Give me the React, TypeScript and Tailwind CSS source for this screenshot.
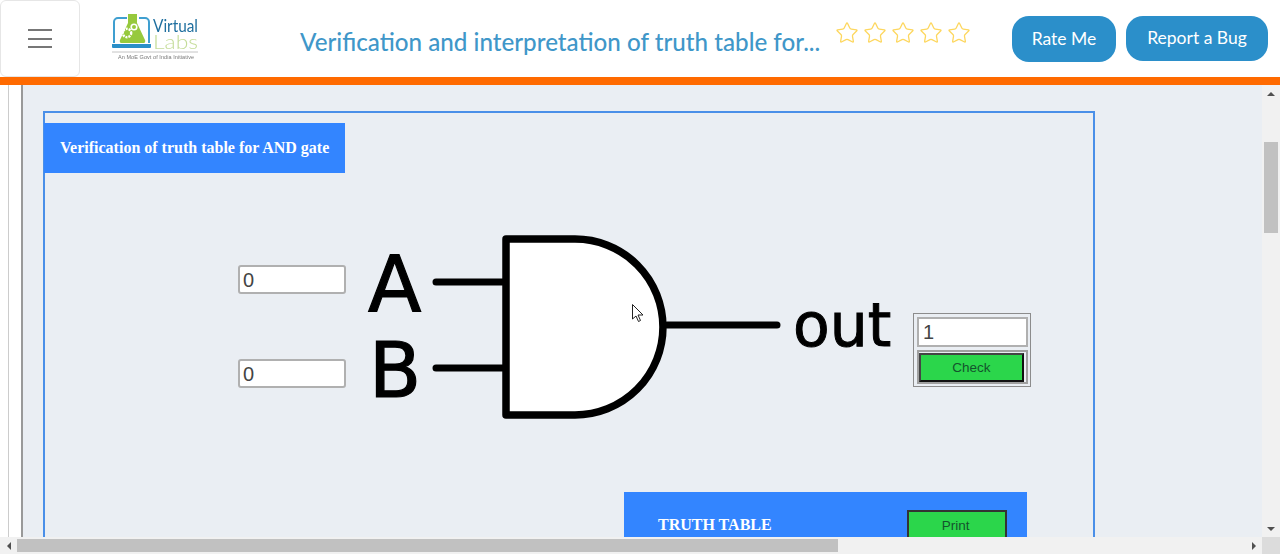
import React from 'react';
import { Star } from 'lucide-react';

const Logo = () => (
  <svg width="92" height="56" viewBox="0 0 92 56" className="block blur-[0.35px]">
    {/* laptop */}
    <path d="M4 33V12a4 4 0 0 1 4-4h9M29 8h6a4 4 0 0 1 4 4v21" fill="none" stroke="#3f9fd0" strokeWidth="2" />
    <path d="M2 34h39v3a1 1 0 0 1-1 1H3a1 1 0 0 1-1-1z" fill="#2a8fc8" />
    {/* flask */}
    <path d="M18 4h9v9l8 17a2 2 0 0 1-2 3H12a2 2 0 0 1-2-3l8-17z" fill="#97c93d" />
    <circle cx="17" cy="23" r="4.2" fill="none" stroke="#fff" strokeWidth="2.4" strokeDasharray="2 1" />
    <circle cx="24" cy="17" r="2.8" fill="none" stroke="#fff" strokeWidth="1.6" />
    <text x="43" y="22" fontFamily="Lato, sans-serif" fontSize="16.5" fill="#1f6f9f" textLength="45" lengthAdjust="spacingAndGlyphs">Virtual</text>
    <text x="43" y="39" fontFamily="Lato, sans-serif" fontSize="20" fontWeight="300" fill="#c4dc98" textLength="45" lengthAdjust="spacingAndGlyphs">Labs</text>
    <path d="M2 42h86" stroke="#c4c4c4" strokeWidth="1" />
    <text x="8" y="49" fontFamily="Liberation Sans, sans-serif" fontSize="5.5" fill="#777" textLength="76">An MoE Govt of India Initiative</text>
  </svg>
);

const Gate = () => (
  <svg width="540" height="200" viewBox="360 225 540 200" className="block shrink-0">
    <path d="M506 239H575A88 88 0 0 1 575 415H506Z" fill="#fff" stroke="#000" strokeWidth="7.5" strokeLinejoin="round" />
    <path d="M436 282H503M436 368H503M667 325H777" fill="none" stroke="#000" strokeWidth="7" strokeLinecap="round" />
    <g fontFamily="DejaVu Sans, sans-serif" fill="#000" stroke="#000">
      <text x="368" y="312" fontSize="78" strokeWidth="1.2">A</text>
      <text x="369" y="397" fontSize="76" strokeWidth="1.2">B</text>
      <text x="793" y="346" fontSize="60" strokeWidth="1">out</text>
    </g>
  </svg>
);

const ArrowUp = () => <span className="block w-0 h-0 border-x-[4px] border-x-transparent border-b-[4px] border-b-[#505050]" />;
const ArrowDown = () => <span className="block w-0 h-0 border-x-[4px] border-x-transparent border-t-[4px] border-t-[#505050]" />;

export default function App() {
  return (
    <div className="w-[1280px] h-[554px] flex flex-col overflow-hidden bg-white font-['Liberation_Sans',sans-serif]">
      {/* Header */}
      <header className="h-[85px] shrink-0 flex items-start bg-white border-b-[8px] border-[#ff6a00]">
        <button className="w-[80px] h-[77px] shrink-0 flex flex-col items-center justify-center gap-[6.5px] border border-[#e6e6e6] rounded-md">
          <span className="block w-[24px] h-[2px] bg-[#777]" />
          <span className="block w-[24px] h-[2px] bg-[#777]" />
          <span className="block w-[24px] h-[2px] bg-[#777]" />
        </button>
        <div className="ml-[30px] mt-[10px] shrink-0">
          <Logo />
        </div>
        <h1 className="ml-[98px] mt-[26px] w-[530px] shrink-0 whitespace-nowrap font-['Lato',sans-serif] text-[24.2px] leading-[32px] font-medium text-[#3f97c9]">
          Verification and interpretation of truth table for...
        </h1>
        <div className="ml-[5px] mt-[21px] flex gap-[4px] shrink-0 text-[#fdd75f]">
          {[0, 1, 2, 3, 4].map((i) => (
            <Star key={i} size={24} strokeWidth={1.3} />
          ))}
        </div>
        <button className="ml-[41px] mt-[16px] w-[104px] h-[46px] shrink-0 rounded-[17px] bg-[#2b8fca] text-white font-['Lato',sans-serif] text-[17.5px]">
          Rate Me
        </button>
        <button className="ml-[10px] mt-[16px] w-[142px] h-[45px] shrink-0 rounded-[17px] bg-[#2b8fca] text-white font-['Lato',sans-serif] text-[17.5px]">
          Report a Bug
        </button>
      </header>

      {/* Body */}
      <div className="flex-1 min-h-0 flex">
        <div className="flex-1 min-w-0 flex overflow-hidden">
          <div className="w-[8px] shrink-0 bg-white" />
          <div className="w-[13px] shrink-0 bg-white border-l border-[#cccccc]" />
          <div className="flex-1 min-w-0 bg-[#eaeef3] border-l-2 border-[#999999] pl-[20px] pt-[26px] overflow-hidden">
            <div className="w-[1052px] h-[600px] border-2 border-b-0 border-[#4a8fe8] pt-[10px]">
              <div className="w-[301px] h-[50px] -ml-px pb-px flex items-center pl-[16px] bg-[#3385ff] text-white font-['Liberation_Serif',serif] font-bold text-[16px]">
                Verification of truth table for AND gate
              </div>

              {/* Gate row */}
              <div className="flex items-start mt-[52px]">
                <div className="ml-[193px] pt-[40px] w-[108px] shrink-0 flex flex-col gap-[65px]">
                  <input readOnly value="0" className="block w-[108px] h-[29px] px-[3px] bg-white border-2 border-[#b0b0b0] rounded-[3px] text-[20px] text-[#444]" />
                  <input readOnly value="0" className="block w-[108px] h-[29px] px-[3px] bg-white border-2 border-[#b0b0b0] rounded-[3px] text-[20px] text-[#444]" />
                </div>
                <div className="ml-[14px]">
                  <Gate />
                </div>
                <div className="ml-[13px] mt-[88px] w-[118px] h-[74px] shrink-0 border border-[#8c8c8c] p-[3px] flex flex-col gap-[3px]">
                  <input readOnly value="1" className="block w-[111px] h-[30px] px-[4px] bg-white border-2 border-[#b0b0b0] text-[20px] text-[#444]" />
                  <div className="h-[34px] w-[111px] border-2 border-[#a0a0a0] pt-px">
                    <button className="block w-[105px] h-[29px] bg-[#2bd64b] border-2 border-t-[#444] border-l-[#444] border-r-[#111] border-b-[#111] text-[13.5px] leading-none text-[#14532d]">
                      Check
                    </button>
                  </div>
                </div>
              </div>

              {/* Truth table header */}
              <div className="ml-[579px] mt-[67px] w-[403px] h-[80px] bg-[#3385ff] flex items-start">
                <span className="ml-[34px] mt-[24px] font-['Liberation_Serif',serif] font-bold text-[16px] leading-[18px] text-white">
                  TRUTH TABLE
                </span>
                <button className="ml-[135px] mt-[18px] w-[100px] h-[32px] pr-[2px] bg-[#2bd64b] border-2 border-[#333] text-[13.5px] leading-none text-[#14532d]">
                  Print
                </button>
              </div>
            </div>
          </div>
        </div>
        {/* Vertical scrollbar */}
        <div className="w-[18px] shrink-0 bg-[#f1f1f1] flex flex-col items-center">
          <div className="h-[17px] flex items-center justify-center shrink-0"><ArrowUp /></div>
          <div className="mt-[40px] w-[14px] h-[91px] bg-[#c1c1c1] shrink-0" />
          <div className="mt-auto h-[17px] flex items-center justify-center shrink-0"><ArrowDown /></div>
        </div>
      </div>

      {/* Horizontal scrollbar */}
      <div className="h-[17px] shrink-0 flex items-center bg-[#f1f1f1]">
        <div className="w-[17px] flex justify-center shrink-0">
          <span className="block w-0 h-0 border-y-[4px] border-y-transparent border-r-[4px] border-r-[#505050]" />
        </div>
        <div className="w-[821px] h-[13px] bg-[#c1c1c1] shrink-0" />
        <div className="ml-auto w-[17px] flex justify-center shrink-0">
          <span className="block w-0 h-0 border-y-[4px] border-y-transparent border-l-[4px] border-l-[#505050]" />
        </div>
        <div className="w-[18px] h-[17px] bg-[#dcdcdc] shrink-0" />
      </div>

      {/* Mouse pointer left in the shot */}
      <svg width="12" height="19" viewBox="0 0 12 19" className="absolute left-[632px] top-[304px]">
        <path d="M.5.5V15L4 12l2.5 5.5 2-1L6 11h5z" fill="#fff" stroke="#222" strokeWidth="1" />
      </svg>
    </div>
  );
}
